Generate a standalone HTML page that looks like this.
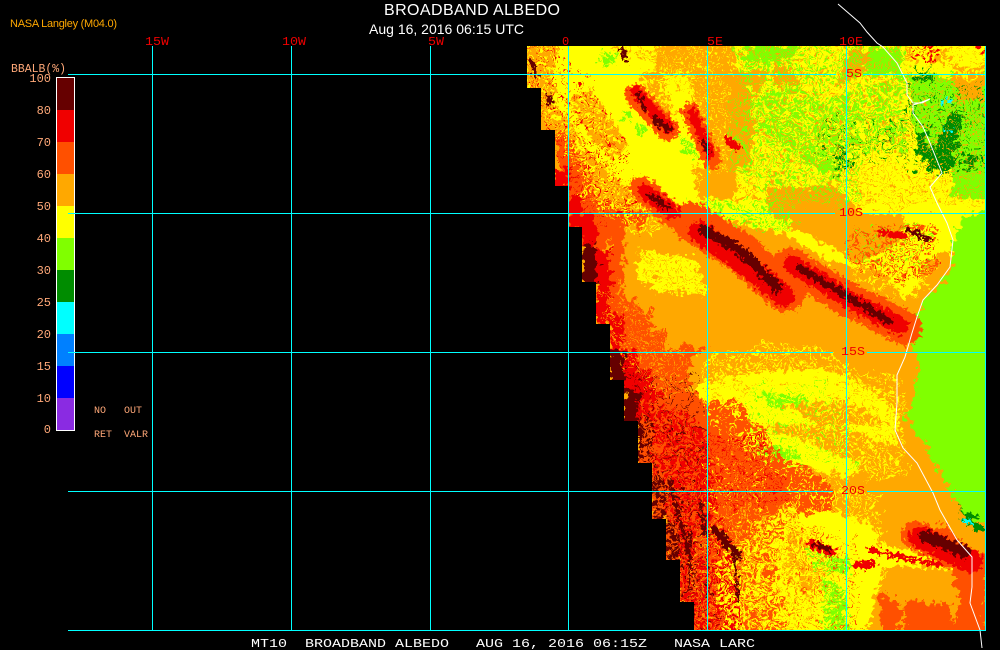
<!DOCTYPE html>
<html>
<head>
<meta charset="utf-8">
<style>
html,body{margin:0;padding:0;background:#000;width:1000px;height:650px;overflow:hidden}
svg{display:block}
.d{fill:#660000}.r{fill:#f00000}.o{fill:#ff5000}.a{fill:#ffa800}.y{fill:#ffff00}.l{fill:#80ff00}.g{fill:#008c00}.c{fill:#00ffff}
.sd,.sr,.so,.sa,.sy,.sl{fill:none;stroke-linecap:round;stroke-linejoin:round}
.sd{stroke:#660000}.sr{stroke:#f00000}.so{stroke:#ff5000}.sa{stroke:#ffa800}.sy{stroke:#ffff00}.sl{stroke:#80ff00}
text{font-family:"Liberation Mono",monospace}
.s{font-family:"Liberation Sans",sans-serif}
.lb{fill:#ffa878;font-size:12px}
.red{fill:#f00000;font-size:12px}
.line{stroke:#00ffff;stroke-width:1;shape-rendering:crispEdges}
</style>
</head>
<body>
<svg width="1000" height="650" viewBox="0 0 1000 650">
<defs>
<clipPath id="map"><polygon points="527,46 985,46 985,630 694,630 694,602 680,602 680,560 666,560 666,519 652,519 652,463 638,463 638,421 624,421 624,380 610,380 610,324 596,324 596,282 582,282 582,227 569,227 569,186 555,186 555,130 541,130 541,88 527,88"/></clipPath>
<filter id="rough" x="0" y="0" width="1" height="1" color-interpolation-filters="sRGB">
<feTurbulence type="fractalNoise" baseFrequency="0.16" numOctaves="3" seed="7" result="n"/>
<feDisplacementMap in="SourceGraphic" in2="n" scale="18" xChannelSelector="R" yChannelSelector="G"/>
</filter>
<filter id="rough3" filterUnits="userSpaceOnUse" x="500" y="30" width="500" height="610" color-interpolation-filters="sRGB">
<feTurbulence type="fractalNoise" baseFrequency="0.07" numOctaves="3" seed="19" result="n"/>
<feDisplacementMap in="SourceGraphic" in2="n" scale="30" xChannelSelector="R" yChannelSelector="G"/>
</filter>
<filter id="rough2" x="-0.1" y="-0.1" width="1.2" height="1.2" color-interpolation-filters="sRGB">
<feTurbulence type="fractalNoise" baseFrequency="0.28" numOctaves="2" seed="3" result="n"/>
<feDisplacementMap in="SourceGraphic" in2="n" scale="12" xChannelSelector="R" yChannelSelector="G"/>
</filter>
<filter id="sp1" x="0" y="0" width="1" height="1" color-interpolation-filters="sRGB">
<feTurbulence type="fractalNoise" baseFrequency="0.22" numOctaves="2" seed="11"/>
<feColorMatrix type="matrix" values="0 0 0 0 0  0 0 0 0 0  0 0 0 0 0  20 0 0 0 -9.5"/>
<feComponentTransfer result="m"><feFuncA type="discrete" tableValues="0 1"/></feComponentTransfer>
<feComposite in="SourceGraphic" in2="m" operator="in"/>
</filter>
<filter id="sp2" x="0" y="0" width="1" height="1" color-interpolation-filters="sRGB">
<feTurbulence type="fractalNoise" baseFrequency="0.3" numOctaves="2" seed="23"/>
<feColorMatrix type="matrix" values="0 0 0 0 0  0 0 0 0 0  0 0 0 0 0  0 20 0 0 -11"/>
<feComponentTransfer result="m"><feFuncA type="discrete" tableValues="0 1"/></feComponentTransfer>
<feComposite in="SourceGraphic" in2="m" operator="in"/>
</filter>
<filter id="sp3" x="0" y="0" width="1" height="1" color-interpolation-filters="sRGB">
<feTurbulence type="fractalNoise" baseFrequency="0.4" numOctaves="2" seed="5"/>
<feColorMatrix type="matrix" values="0 0 0 0 0  0 0 0 0 0  0 0 0 0 0  0 0 20 0 -12"/>
<feComponentTransfer result="m"><feFuncA type="discrete" tableValues="0 1"/></feComponentTransfer>
<feComposite in="SourceGraphic" in2="m" operator="in"/>
</filter>
<filter id="sp4" x="0" y="0" width="1" height="1" color-interpolation-filters="sRGB">
<feTurbulence type="fractalNoise" baseFrequency="0.35" numOctaves="2" seed="41"/>
<feColorMatrix type="matrix" values="0 0 0 0 0  0 0 0 0 0  0 0 0 0 0  20 0 0 0 -13"/>
<feComponentTransfer result="m"><feFuncA type="discrete" tableValues="0 1"/></feComponentTransfer>
<feComposite in="SourceGraphic" in2="m" operator="in"/>
</filter>
</defs>
<rect width="1000" height="650" fill="#000"/>

<g clip-path="url(#map)">
<g filter="url(#rough)" shape-rendering="crispEdges">
<rect x="480" y="20" width="520" height="630" class="a"/>
<!-- upper yellow -->
<polygon class="y" points="520,30 1000,30 1000,240 950,262 905,300 880,270 830,262 780,232 700,215 640,195 600,165 560,110 520,70"/>
<!-- upper orange patches -->
<polygon class="a" points="520,30 560,30 555,60 552,125 520,125"/>
<polygon class="a" points="657,40 735,40 735,72 768,72 755,110 750,168 712,168 700,120 690,75 657,72"/>
<polygon class="a" points="565,100 590,90 630,145 612,160 585,130"/>
<polygon class="a" points="555,130 580,150 620,180 650,205 690,218 640,225 590,200 555,180"/>
<polygon class="a" points="640,70 660,70 675,115 655,120"/>
<polygon class="a" points="766,188 834,186 860,214 905,215 900,240 860,265 820,240 770,215"/>
<polygon class="a" points="690,165 735,168 735,200 700,198"/>
<polygon class="a" points="870,170 890,172 892,186 875,186"/>
<polygon class="a" points="880,196 890,196 892,206 880,206"/>
<polygon class="a" points="775,60 800,80 790,120 770,100"/>
<polygon class="a" points="850,50 875,50 860,75 835,90"/>
<!-- lime patches -->
<polygon class="l" points="748,100 790,85 830,100 860,85 905,78 908,150 875,150 860,178 818,172 795,152 762,135"/>
<polygon class="l" points="745,46 800,46 790,62 745,62"/>
<polygon class="l" points="870,46 905,50 900,75 865,75"/>
<polygon class="l" points="905,75 1000,68 1000,178 978,200 950,196 955,172 925,160 910,120"/>
<polygon class="l" points="600,53 615,53 615,65 600,65"/>
<polygon class="l" points="678,133 700,150 698,158 682,150"/>
<polygon class="l" points="622,110 632,112 630,122 622,120"/>
<polygon class="l" points="636,122 650,128 645,134 635,130"/>
<polygon class="l" points="640,262 692,264 690,280 640,275"/>
<polygon class="l" points="905,165 930,185 925,200 900,185"/>
<polygon class="y" points="830,158 905,150 935,160 950,190 940,212 880,212 850,195"/>
<!-- right big lime -->
<polygon class="l" points="1000,205 962,216 952,250 945,272 925,298 915,320 912,345 920,362 914,400 905,415 925,445 946,485 965,515 1000,530"/>
<polygon class="a" points="925,262 945,250 955,265 935,290 918,295"/>
<!-- top right reds -->
<polygon class="a" points="905,46 950,46 950,62 905,62"/>
<polygon class="r" points="912,46 938,46 935,62 928,66 920,58 910,56"/>
<polygon class="a" points="950,65 985,65 985,100 960,100"/>
<polygon class="r" points="978,46 985,46 985,56 978,54"/>
<!-- greens -->
<polygon class="g" points="917,133 925,133 940,165 932,172 917,150"/>
<polygon class="g" points="948,115 962,115 958,140 952,172 938,175 934,150"/>
<polygon class="g" points="835,146 850,146 850,172 835,172"/>
<polygon class="g" points="915,68 930,68 930,80 915,80"/>
<polygon class="g" points="962,155 975,155 975,168 962,168"/>
<polygon class="g" points="905,105 912,105 912,114 905,114"/>
<polygon class="c" points="944,96 950,96 950,104 944,104"/>
<polygon class="c" points="944,128 950,128 950,134 944,134"/>

<!-- west swaths -->
<polygon class="a" points="550,130 570,130 590,170 640,215 690,240 700,300 640,300 620,270 570,240"/>
<polygon class="o" points="555,130 570,135 585,170 600,205 610,235 600,260 570,240"/>
<polygon class="o" points="585,195 650,215 640,232 590,232"/>
<polygon class="y" points="640,250 695,258 708,295 660,292 635,278"/>
<rect x="555" y="170" width="14" height="20" class="r"/>
<rect x="569" y="195" width="13" height="35" class="r"/>
<rect x="582" y="215" width="14" height="30" class="r"/>
<rect x="582" y="245" width="14" height="40" class="d"/>
<rect x="596" y="250" width="14" height="75" class="r"/>
<rect x="610" y="215" width="14" height="40" class="o"/>
<rect x="610" y="255" width="14" height="60" class="o"/>
<rect x="610" y="315" width="14" height="35" class="r"/>
<rect x="610" y="350" width="14" height="35" class="d"/>
<rect x="624" y="225" width="14" height="75" class="a"/>
<rect x="624" y="300" width="14" height="50" class="o"/>
<rect x="624" y="350" width="14" height="40" class="r"/>
<rect x="624" y="390" width="14" height="35" class="d"/>
<rect x="638" y="310" width="14" height="60" class="o"/>
<rect x="638" y="370" width="14" height="50" class="r"/>
<rect x="638" y="420" width="14" height="45" class="d"/>
<rect x="652" y="330" width="14" height="60" class="o"/>
<rect x="652" y="390" width="14" height="85" class="r"/>
<rect x="652" y="475" width="14" height="45" class="d"/>
<rect x="666" y="350" width="14" height="60" class="o"/>
<rect x="666" y="410" width="14" height="110" class="r"/>
<rect x="666" y="520" width="14" height="42" class="d"/>
<polygon class="o" points="680,345 705,350 700,395 680,405"/>
<polygon class="a" points="690,355 710,352 705,385 690,395"/>
<!-- lower west red mass -->
<polygon class="o" points="680,395 705,400 750,410 790,455 835,490 830,520 800,560 805,640 680,640"/>
<polygon class="r" points="680,405 705,430 715,500 730,540 745,640 680,640"/>

<!-- yellow bands middle -->
<polygon class="y" points="695,385 770,370 830,370 880,395 900,420 895,445 830,425 760,425 700,400"/>
<polygon class="l" points="760,392 805,396 815,408 770,408"/>
<polygon class="a" points="780,405 850,400 890,425 820,425"/>
<polygon class="y" points="735,425 790,435 860,465 850,478 790,462 745,450"/>
<polygon class="l" points="755,445 790,448 805,458 775,458"/>
<polygon class="a" points="855,480 890,490 905,470 935,510 870,520"/>
<!-- lower middle yellow -->
<polygon class="y" points="785,520 830,510 870,525 885,555 865,640 790,640 775,570"/>
<polygon class="a" points="790,525 840,560 810,600 785,575"/>
<polygon class="l" points="800,545 850,560 850,575 815,570"/>
<polygon class="l" points="820,575 845,590 850,640 825,640"/>
<polygon class="y" points="865,545 985,555 985,570 870,565"/>
<!-- bottom right orange-red -->
<polygon class="o" points="880,590 905,610 895,640 880,625"/>
<polygon class="o" points="905,600 950,605 955,640 905,640"/>
<polygon class="o" points="945,555 985,565 985,640 950,640 960,600"/>
<polygon class="a" points="900,520 925,522 945,538 925,545 900,538"/>
<polygon class="o" points="905,530 945,525 960,540 920,550"/>
<polygon class="g" points="958,508 975,518 985,530 972,532"/>
<polygon class="c" points="965,517 975,522 972,526 965,522"/>
</g>

<!-- speckle layers -->
<g filter="url(#rough3)" shape-rendering="crispEdges">
<polygon filter="url(#sp2)" class="a" points="520,40 730,40 760,200 860,215 850,250 740,220 640,195 560,130 520,90"/>
<polygon filter="url(#sp2)" class="y" points="520,40 600,40 700,100 700,215 640,240 590,210 555,130 520,90"/>
<polygon filter="url(#sp3)" class="y" points="650,40 770,40 770,180 690,170"/>
<polygon filter="url(#sp4)" class="r" points="520,40 560,40 620,130 650,220 590,225 555,180 520,90"/>
<polygon filter="url(#sp1)" class="y" points="745,85 910,75 910,160 860,180 760,140"/>
<polygon filter="url(#sp2)" class="l" points="730,40 910,40 905,75 740,100"/>
<polygon filter="url(#sp2)" class="l" points="730,100 860,100 860,205 780,205 730,170"/>
<polygon filter="url(#sp2)" class="l" points="640,200 800,200 790,235 700,225"/>
<polygon filter="url(#sp3)" class="a" points="730,40 1000,40 1000,200 880,210 790,210 730,170"/>
<polygon filter="url(#sp1)" class="y" points="905,40 1000,40 1000,75 905,75"/>
<polygon filter="url(#sp4)" class="g" points="905,80 1000,80 1000,175 905,175"/>
<polygon filter="url(#sp4)" class="g" points="820,120 905,120 905,165 820,165"/>
<!-- right-mid speckle -->
<polygon filter="url(#sp2)" class="y" points="850,225 940,225 930,285 905,300 850,275"/>
<polygon filter="url(#sp2)" class="o" points="850,225 935,225 930,275 900,285 850,260"/>
<polygon filter="url(#sp4)" class="r" points="850,225 935,225 930,275 900,285 850,260"/>
<polygon filter="url(#sp4)" class="l" points="850,225 930,225 930,270 850,260"/>
<polygon filter="url(#sp3)" class="a" points="640,245 710,255 710,300 640,290"/>
<!-- mid -->
<polygon filter="url(#sp2)" class="y" points="700,360 780,340 900,380 905,480 780,480 700,420"/>
<polygon filter="url(#sp4)" class="a" points="700,380 900,380 905,450 740,470"/>
<polygon filter="url(#sp4)" class="l" points="745,385 830,385 860,470 750,460"/>
<!-- lower west -->
<polygon filter="url(#sp1)" class="o" points="640,400 740,400 800,480 790,650 680,650 640,520"/>
<polygon filter="url(#sp3)" class="r" points="680,420 760,440 810,540 800,650 680,650"/>
<polygon filter="url(#sp4)" class="y" points="650,440 760,470 800,650 680,650"/>
<polygon filter="url(#sp1)" class="y" points="715,560 790,500 830,540 830,650 725,650"/>
<polygon filter="url(#sp3)" class="a" points="695,520 790,500 830,570 800,650 690,650"/>
<polygon filter="url(#sp4)" class="d" points="600,360 700,380 710,520 720,650 680,650 640,519"/>
<polygon filter="url(#sp2)" class="y" points="785,480 880,490 890,570 840,650 800,560"/>
<polygon filter="url(#sp4)" class="o" points="780,510 860,540 860,650 790,650"/>
<polygon filter="url(#sp3)" class="a" points="596,290 640,280 690,340 690,395 650,400 610,340"/>
</g>

<!-- dark ridges -->
<g filter="url(#rough2)" shape-rendering="crispEdges">
<path class="so" stroke-width="40" d="M692,222 L740,252 L785,292"/>
<path class="so" stroke-width="34" d="M790,265 L850,300 L905,328"/>
<path class="so" stroke-width="24" d="M642,188 L672,215"/>
<path class="so" stroke-width="22" d="M636,95 L668,130"/>
<path class="so" stroke-width="18" d="M690,112 L712,160"/>
<path class="sr" stroke-width="22" d="M700,232 L742,262 L784,296"/>
<path class="sr" stroke-width="18" d="M792,264 L850,300 L900,326"/>
<path class="sr" stroke-width="15" d="M645,192 L672,212"/>
<path class="sr" stroke-width="12" d="M636,92 L668,128"/>
<path class="sr" stroke-width="9" d="M692,112 L710,155"/>
<path class="sr" stroke-width="7" d="M728,140 L738,148"/>
<path class="sd" stroke-width="10" d="M704,230 L740,250 L778,288"/>
<path class="sd" stroke-width="7" d="M800,268 L850,298 L890,322"/>
<path class="sd" stroke-width="6" d="M650,195 L668,208"/>
<path class="sd" stroke-width="7" d="M655,120 L668,128"/>
<path class="sd" stroke-width="4" d="M702,140 L708,152"/>
<path class="sd" stroke-width="5" d="M622,50 L625,58"/>
<path class="sd" stroke-width="5" d="M532,62 L536,76"/>
<path class="sd" stroke-width="4" d="M638,95 L645,110"/>
<path class="sd" stroke-width="4" d="M548,96 L552,104"/>
<!-- fine ridges right mid -->
<path class="sd" stroke-width="5" d="M908,230 L930,240"/>
<path class="sr" stroke-width="6" d="M880,232 L905,236"/>
<!-- lower bands -->
<path class="sr" stroke-width="9" d="M812,544 L832,552"/>
<path class="sd" stroke-width="4" d="M815,544 L830,550"/>
<path class="sr" stroke-width="9" d="M858,565 L872,564"/>
<path class="so" stroke-width="28" d="M915,535 L975,565"/>
<path class="sr" stroke-width="22" d="M920,537 L972,562"/>
<path class="sd" stroke-width="12" d="M925,536 L965,552"/>
<path class="sr" stroke-width="5" d="M870,550 L940,565"/>
<!-- west dark veins -->
<path class="sd" stroke-width="8" d="M715,530 L728,545 L738,555"/>
<path class="sd" stroke-width="3" d="M690,530 L690,590"/>
<path class="sd" stroke-width="4" d="M670,480 L680,520 L690,560"/>
<path class="sd" stroke-width="3" d="M700,500 L705,535"/>
<path class="sd" stroke-width="3" d="M735,560 L738,600"/>
</g>
</g>

<!-- coast -->
<polyline fill="none" stroke="#fff" stroke-width="1" points="838,4 860,23 867,32 877,43 883,47 897,63 907,83 907,95 913,103 922,103 930,99 922,102 913,105 913,113 923,127 930,143 942,173 930,187 937,203 947,223 953,240 950,267 937,285 923,300 917,317 912,333 905,357 897,375 897,403 895,430 903,448 917,463 933,493 940,510 957,540 972,557 972,587 970,603 980,630 982,648"/>

<!-- grid -->
<g class="line">
<line x1="152.5" y1="46" x2="152.5" y2="630"/>
<line x1="291.5" y1="46" x2="291.5" y2="630"/>
<line x1="430.5" y1="46" x2="430.5" y2="630"/>
<line x1="568.5" y1="46" x2="568.5" y2="630"/>
<line x1="707.5" y1="46" x2="707.5" y2="630"/>
<line x1="846.5" y1="46" x2="846.5" y2="630"/>
<line x1="985.5" y1="46" x2="985.5" y2="630"/>
<line x1="68" y1="74.5" x2="836" y2="74.5"/><line x1="863" y1="74.5" x2="986" y2="74.5"/>
<line x1="68" y1="213.5" x2="835" y2="213.5"/><line x1="863" y1="213.5" x2="986" y2="213.5"/>
<line x1="68" y1="352.5" x2="833" y2="352.5"/><line x1="867" y1="352.5" x2="986" y2="352.5"/>
<line x1="68" y1="491.5" x2="833" y2="491.5"/><line x1="867" y1="491.5" x2="986" y2="491.5"/>
<line x1="68" y1="630.5" x2="986" y2="630.5"/>
</g>

<!-- colorbar -->
<g shape-rendering="crispEdges">
<rect x="56" y="77" width="19" height="354" fill="#fff"/>
<rect x="57" y="78" width="17" height="32" fill="#660000"/>
<rect x="57" y="110" width="17" height="32" fill="#f00000"/>
<rect x="57" y="142" width="17" height="32" fill="#ff5000"/>
<rect x="57" y="174" width="17" height="32" fill="#ffa800"/>
<rect x="57" y="206" width="17" height="32" fill="#ffff00"/>
<rect x="57" y="238" width="17" height="32" fill="#80ff00"/>
<rect x="57" y="270" width="17" height="32" fill="#008c00"/>
<rect x="57" y="302" width="17" height="32" fill="#00ffff"/>
<rect x="57" y="334" width="17" height="32" fill="#0080ff"/>
<rect x="57" y="366" width="17" height="32" fill="#0000ff"/>
<rect x="57" y="398" width="17" height="32" fill="#8a2be2"/>
</g>
<line class="line" x1="68" y1="213.5" x2="75" y2="213.5"/>
<line class="line" x1="68" y1="352.5" x2="75" y2="352.5"/>

<!-- text -->
<text class="s" x="384" y="15" fill="#fff" font-size="16" textLength="176" lengthAdjust="spacing">BROADBAND ALBEDO</text>
<text class="s" x="369" y="34" fill="#fff" font-size="14" textLength="155" lengthAdjust="spacing">Aug 16, 2016 06:15 UTC</text>
<text class="s" x="10" y="27" fill="#ffa800" font-size="11" textLength="107" lengthAdjust="spacing">NASA Langley (M04.0)</text>

<text class="red" x="145" y="45" textLength="24" lengthAdjust="spacingAndGlyphs">15W</text>
<text class="red" x="282" y="45" textLength="24" lengthAdjust="spacingAndGlyphs">10W</text>
<text class="red" x="428" y="45" textLength="16" lengthAdjust="spacingAndGlyphs">5W</text>
<text class="red" x="562" y="45">0</text>
<text class="red" x="707" y="45" textLength="16" lengthAdjust="spacingAndGlyphs">5E</text>
<text class="red" x="839" y="45" textLength="24" lengthAdjust="spacingAndGlyphs">10E</text>
<text class="red" x="846" y="77" textLength="16" lengthAdjust="spacingAndGlyphs">5S</text>
<text class="red" x="839" y="216" textLength="24" lengthAdjust="spacingAndGlyphs">10S</text>
<text class="red" x="841" y="355" textLength="24" lengthAdjust="spacingAndGlyphs">15S</text>
<text class="red" x="841" y="494" textLength="24" lengthAdjust="spacingAndGlyphs">20S</text>

<text class="lb" x="11" y="72" textLength="55" lengthAdjust="spacingAndGlyphs">BBALB(%)</text>
<g class="lb" text-anchor="end">
<text class="lb" x="51" y="82">100</text>
<text class="lb" x="51" y="114">80</text>
<text class="lb" x="51" y="146">70</text>
<text class="lb" x="51" y="178">60</text>
<text class="lb" x="51" y="210">50</text>
<text class="lb" x="51" y="242">40</text>
<text class="lb" x="51" y="274">30</text>
<text class="lb" x="51" y="306">25</text>
<text class="lb" x="51" y="338">20</text>
<text class="lb" x="51" y="370">15</text>
<text class="lb" x="51" y="402">10</text>
<text class="lb" x="51" y="433">0</text>
</g>
<text x="94" y="413" fill="#ffa878" font-size="10">NO</text>
<text x="124" y="413" fill="#ffa878" font-size="10">OUT</text>
<text x="94" y="437" fill="#ffa878" font-size="10">RET</text>
<text x="124" y="437" fill="#ffa878" font-size="10">VALR</text>

<text x="251" y="647" fill="#fff" font-size="12" xml:space="preserve" style="white-space:pre" textLength="504" lengthAdjust="spacingAndGlyphs">MT10  BROADBAND ALBEDO   AUG 16, 2016 06:15Z   NASA LARC</text>
</svg>
</body>
</html>
